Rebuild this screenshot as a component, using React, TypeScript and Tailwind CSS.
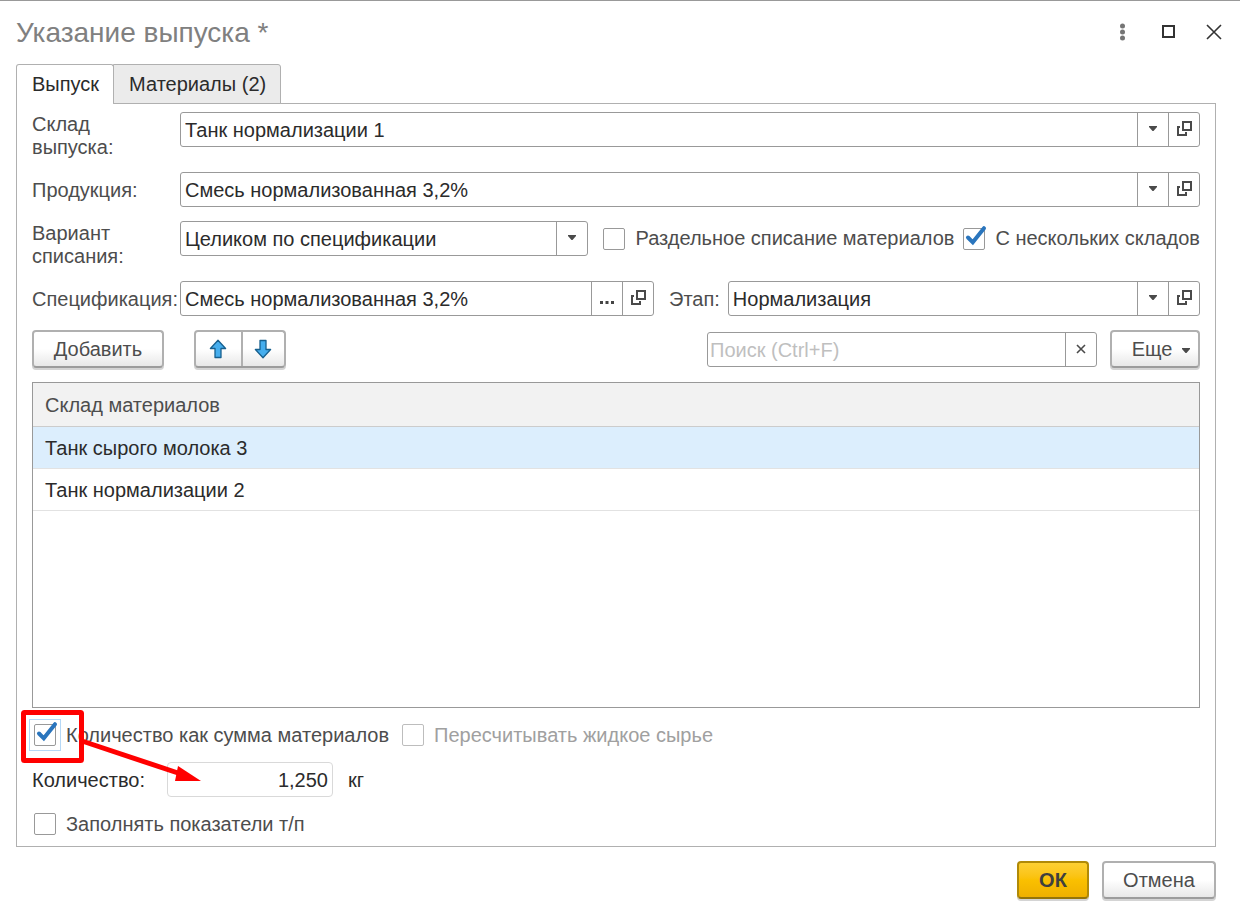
import { useState, type ReactNode } from "react";

const fieldBox =
  "flex h-[35px] min-w-0 overflow-hidden rounded-[3px] border border-[#999999] bg-white text-[#2b2b2b]";
const fieldButton =
  "flex w-[31px] shrink-0 items-center justify-center border-l border-[#999999] text-[#444444]";
const raisedButton =
  "h-[38px] rounded-[4px] border-2 border-[#b0b0b0] border-b-[#9c9c9c] bg-linear-to-b from-white from-50% to-[#e8e8e8] text-[#4d4d4d] shadow-[0_2px_0_#d4d4d4]";

function CaretIcon() {
  return (
    <svg width="8" height="5" viewBox="0 0 8 5" aria-hidden="true">
      <path d="M0 0h8v1L4.5 5h-1L0 1z" fill="#4a4a4a" />
    </svg>
  );
}

function OpenIcon() {
  return (
    <svg width="15" height="15" viewBox="0 0 15 15" fill="none" stroke="#4a4a4a" strokeWidth="2" aria-hidden="true">
      <path d="M6 1h8v8H6z" />
      <path d="M3 6H1v8h8v-3" />
    </svg>
  );
}

function OpenButton({ label }: { label: string }) {
  return (
    <button type="button" aria-label={label} className={`${fieldButton} pb-0.5 pl-px`}>
      <OpenIcon />
    </button>
  );
}

function SelectField({ id, value, open, className = "" }: { id: string; value: string; open?: boolean; className?: string }) {
  return (
    <div className={`${fieldBox} ${className}`}>
      <div className="relative flex min-w-0 flex-1">
        <select id={id} className="w-full min-w-0 appearance-none bg-transparent pt-0.5 pr-9 pl-1 outline-none">
          <option>{value}</option>
        </select>
        <span className="pointer-events-none absolute inset-y-0 right-0 flex w-[31px] items-center justify-center border-l border-[#999999] pb-0.5">
          <CaretIcon />
        </span>
      </div>
      {open && <OpenButton label="Открыть" />}
    </div>
  );
}

function CheckField({
  label,
  checked = false,
  disabled = false,
  highlighted = false,
}: {
  label: string;
  checked?: boolean;
  disabled?: boolean;
  highlighted?: boolean;
}) {
  const [on, setOn] = useState(checked);
  return (
    <label className={`flex items-center gap-2.5 whitespace-nowrap ${disabled ? "text-[#a0a0a0]" : "text-[#4d4d4d]"}`}>
      <span className="relative flex size-[22px] shrink-0">
        <input
          type="checkbox"
          checked={on}
          disabled={disabled}
          onChange={() => setOn(!on)}
          className={`size-[22px] appearance-none rounded-[2px] border bg-white outline-none ${disabled ? "border-[#bdbdbd]" : "border-[#999999]"}`}
        />
        {highlighted && <span className="pointer-events-none absolute -inset-[5px] border border-[#b5d8f7]" />}
        {on && (
          <svg className="pointer-events-none absolute -top-[3px] left-0" width="24" height="24" viewBox="0 0 24 24" fill="none" aria-hidden="true">
            <path d="M5 12.5 9.8 17.3 21 3.2" stroke="#2a75bd" strokeWidth="4" strokeLinecap="round" />
          </svg>
        )}
      </span>
      {label}
    </label>
  );
}

function Row({ label, htmlFor, children }: { label: string; htmlFor: string; children: ReactNode }) {
  return (
    <div className="grid grid-cols-[148px_minmax(0,1fr)] items-start">
      <label htmlFor={htmlFor} className="-mb-px flex min-h-9 items-center pt-px leading-[23px] text-[#4d4d4d]">
        <span className="max-w-[100px]">{label}</span>
      </label>
      {children}
    </div>
  );
}

function ArrowIcon({ down }: { down?: boolean }) {
  return (
    <svg width="18" height="20" viewBox="0 0 18 20" className={down ? "rotate-180" : ""} aria-hidden="true">
      <path d="M9 1.2 16.6 9.5H12V18.5H6V9.5H1.4z" fill="#46aeee" stroke="#17608f" strokeWidth="1.3" strokeLinejoin="round" />
    </svg>
  );
}

const warehouses = ["Танк сырого молока 3", "Танк нормализации 2"];

export default function App() {
  const [selected, setSelected] = useState(0);
  return (
    <div className="flex min-h-screen flex-col border-t border-[#999999] bg-white pr-6 pb-[11px] pl-4 font-['Liberation_Sans',Arial,sans-serif] text-[20px] leading-[23px]">
      <header className="flex h-[63px] items-center justify-between">
        <h1 className="text-[28px] leading-8 text-[#808080]">Указание выпуска *</h1>
        <div className="flex items-center gap-[30px] pb-0.5">
          <button type="button" aria-label="Меню" className="flex size-4 items-center justify-center">
            <svg width="6" height="18" viewBox="0 0 6 18" fill="#757575" className="shrink-0" aria-hidden="true">
              <circle cx="3.5" cy="3" r="2.5" />
              <circle cx="3.5" cy="9" r="2.5" />
              <circle cx="3.5" cy="15" r="2.5" />
            </svg>
          </button>
          <button type="button" aria-label="Развернуть" className="flex size-4 items-center justify-center">
            <svg width="14" height="14" viewBox="0 0 14 14" fill="none" stroke="#333333" strokeWidth="2" aria-hidden="true">
              <path d="M2 1h11v11H2z" />
            </svg>
          </button>
          <button type="button" aria-label="Закрыть" className="-mr-1.5 flex size-4 items-center justify-center">
            <svg width="16" height="16" viewBox="0 0 16 16" fill="none" stroke="#333333" strokeWidth="1.6" aria-hidden="true">
              <path d="M1 1l14 14M15 1L1 15" />
            </svg>
          </button>
        </div>
      </header>

      <div role="tablist" className="relative z-10 -mb-px flex h-10">
        <button type="button" role="tab" aria-selected="true" className="rounded-t-[3px] border border-b-0 border-[#b0b0b0] bg-white pr-3.5 pl-[15px] text-[#2b2b2b]">
          Выпуск
        </button>
        <button type="button" role="tab" aria-selected="false" className="-ml-px rounded-tr-[3px] border border-[#b0b0b0] bg-[#ebebeb] pr-3.5 pl-[15px] text-[#2b2b2b]">
          Материалы (2)
        </button>
      </div>

      <main className="flex flex-1 flex-col gap-3.5 border border-[#b0b0b0] px-[15px] pt-2 pb-[9px]">
        <Row label="Склад выпуска:" htmlFor="warehouse">
          <SelectField id="warehouse" value="Танк нормализации 1" open />
        </Row>
        <Row label="Продукция:" htmlFor="product">
          <SelectField id="product" value="Смесь нормализованная 3,2%" open />
        </Row>
        <Row label="Вариант списания:" htmlFor="variant">
          <div className="flex items-center gap-[15px]">
            <SelectField id="variant" value="Целиком по спецификации" className="flex-1" />
            <div className="flex items-center gap-[9px]">
              <CheckField label="Раздельное списание материалов" />
              <CheckField label="С нескольких складов" checked />
            </div>
          </div>
        </Row>
        <Row label="Спецификация:" htmlFor="spec">
          <div className="grid grid-cols-[minmax(0,474fr)_minmax(0,531fr)] gap-[15px]">
            <div className={fieldBox}>
              <input id="spec" defaultValue="Смесь нормализованная 3,2%" className="w-full min-w-0 flex-1 pt-0.5 pl-1 outline-none" />
              <button type="button" aria-label="Выбрать" className={fieldButton}>
                <svg width="14" height="3" viewBox="0 0 14 3" fill="#444444" className="mt-2" aria-hidden="true">
                  <path d="M0 0h3v3H0zM5.5 0h3v3h-3zM11 0h3v3h-3z" />
                </svg>
              </button>
              <OpenButton label="Открыть" />
            </div>
            <div className="flex items-center gap-2">
              <label htmlFor="stage" className="pt-0.5 text-[#4d4d4d]">
                Этап:
              </label>
              <SelectField id="stage" value="Нормализация" open className="flex-1" />
            </div>
          </div>
        </Row>

        <div className="flex items-center">
          <button type="button" className={`${raisedButton} w-[132px]`}>
            Добавить
          </button>
          <div className={`${raisedButton} ml-[30px] flex w-[92px]`}>
            <button type="button" aria-label="Переместить вверх" className="flex w-[47px] items-center justify-center border-r-2 border-[#b0b0b0] pr-0.5">
              <ArrowIcon />
            </button>
            <button type="button" aria-label="Переместить вниз" className="flex flex-1 items-center justify-center pr-0.5">
              <ArrowIcon down />
            </button>
          </div>
          <div className={`${fieldBox} ml-auto w-[390px]`}>
            <input type="text" aria-label="Поиск" placeholder="Поиск (Ctrl+F)" className="w-full min-w-0 flex-1 pt-0.5 pl-0.5 outline-none placeholder:text-[#bfbfbf]" />
            <button type="button" aria-label="Очистить" className={fieldButton}>
              <svg width="10" height="10" viewBox="0 0 10 10" stroke="#4a4a4a" strokeWidth="1.6" aria-hidden="true">
                <path d="M1 1l8 8M9 1L1 9" />
              </svg>
            </button>
          </div>
          <button type="button" className={`${raisedButton} ml-[13px] flex w-[90px] items-center justify-center gap-2.5 pl-3`}>
            Еще
            <span className="pt-0.5">
              <CaretIcon />
            </span>
          </button>
        </div>

        <div className="min-h-40 flex-1 border border-[#999999]">
          <table className="w-full border-collapse text-left">
            <thead>
              <tr className="h-[43px] border-b border-[#cccccc] bg-[#f2f2f2] text-[#4d4d4d]">
                <th className="px-3 pt-0.5 font-normal">Склад материалов</th>
              </tr>
            </thead>
            <tbody className="text-[#2b2b2b]">
              {warehouses.map((name, i) => (
                <tr
                  key={name}
                  onClick={() => setSelected(i)}
                  className={`h-[42px] border-b border-[#e2e2e2] ${selected === i ? "bg-[#dceefd]" : ""}`}
                >
                  <td className="px-3 pt-0.5">{name}</td>
                </tr>
              ))}
            </tbody>
          </table>
        </div>

        <div className="relative flex h-[26px] items-center gap-[13px] pl-0.5">
          <CheckField label="Количество как сумма материалов" checked highlighted />
          <CheckField label="Пересчитывать жидкое сырье" disabled />
          <svg
            className="pointer-events-none absolute -top-3 -left-[11px]"
            width="184"
            height="76"
            viewBox="0 0 184 76"
            fill="none"
            aria-hidden="true"
          >
            <rect x="2.5" y="2.5" width="58" height="48" rx="1" stroke="#ff0000" strokeWidth="5" />
            <path d="M61 31 160 64" stroke="#ff0000" strokeWidth="5" />
            <path d="M157 56 180 71 154 71z" fill="#ff0000" />
          </svg>
        </div>
        <div className="flex items-center text-[#2b2b2b]">
          <label htmlFor="quantity" className="w-[135px] pt-0.5">
            Количество:
          </label>
          <input
            id="quantity"
            readOnly
            value="1,250"
            className="h-[35px] w-[166px] rounded-[4px] border border-[#d9d9d9] px-1 pt-0.5 text-right outline-none"
          />
          <span className="ml-[15px] pt-0.5">кг</span>
        </div>
        <div className="flex h-[26px] items-center pl-0.5">
          <CheckField label="Заполнять показатели т/п" />
        </div>
      </main>

      <footer className="mt-3.5 flex justify-end gap-[13px]">
        <button
          type="button"
          className="h-[38px] w-[72px] rounded-[4px] border-2 border-[#b08a08] border-b-[#94740a] bg-linear-to-b from-[#fdd032] via-[#fac000] to-[#efb000] font-bold text-[#3f3f3f] shadow-[0_2px_0_#d4d4d4]"
        >
          ОК
        </button>
        <button type="button" className={`${raisedButton} w-[114px]`}>
          Отмена
        </button>
      </footer>
    </div>
  );
}
